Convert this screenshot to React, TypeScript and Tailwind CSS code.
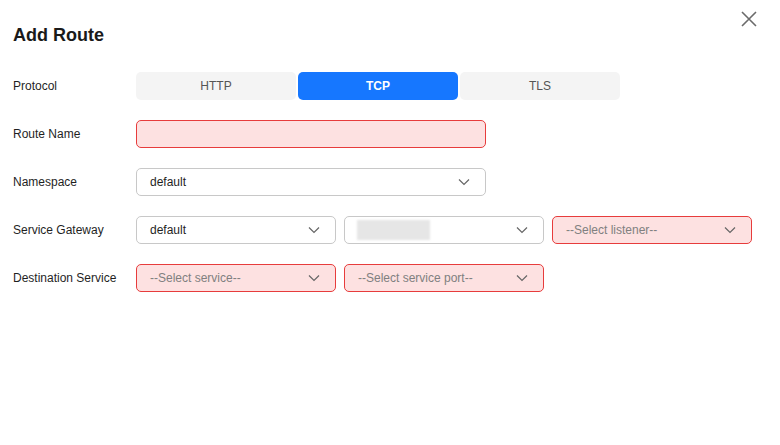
import React from "react";

const Chevron = () => (
  <svg width="12" height="8" viewBox="0 0 12 8" fill="none" className="shrink-0">
    <path d="M1 1.5 L6 6.5 L11 1.5" stroke="#666" strokeWidth="1.2" />
  </svg>
);

function Select({ value, placeholder, error, width, blur }: { value?: string; placeholder?: string; error?: boolean; width: string; blur?: boolean }) {
  return (
    <div
      className={`${width} h-[28px] flex items-center justify-between pl-[13px] pr-[15px] rounded-[5px] border ${
        error ? "border-[#e73c3c] bg-[#fde1e1]" : "border-[#c8c8c8] bg-white"
      }`}
    >
      {blur ? (
        <div className="w-[73px] h-[20px] bg-[#e6e6e6] blur-[1px] -ml-[1px]" />
      ) : (
        <span className={`text-[12px] ${value ? "text-[#1f1f1f]" : "text-[#808080]"}`}>{value ?? placeholder}</span>
      )}
      <Chevron />
    </div>
  );
}

function Row({ label, children }: { label: string; children: React.ReactNode }) {
  return (
    <div className="flex items-center h-[28px]">
      <div className="w-[123px] text-[12px] text-[#1f1f1f]">{label}</div>
      <div className="flex gap-[8px]">{children}</div>
    </div>
  );
}

export default function App() {
  return (
    <div className="w-[780px] h-[445px] bg-white relative" style={{ fontFamily: "'Liberation Sans', Arial, sans-serif" }}>
      <button className="absolute left-[741px] top-[11px] w-[16px] h-[16px]">
        <svg width="16" height="16" viewBox="0 0 16 16">
          <path d="M1 1 L15 15 M15 1 L1 15" stroke="#6b6b6b" strokeWidth="1.6" />
        </svg>
      </button>
      <div className="pl-[13px] pt-[24px]">
        <h1 className="text-[18px] font-bold text-[#1a1a1a] leading-[22px]">Add Route</h1>
        <div className="mt-[26px] flex flex-col gap-[20px]">
          <Row label="Protocol">
            <div className="flex gap-[2px]">
              <div className="w-[160px] h-[28px] rounded-[5px] bg-[#f4f4f4] flex items-center justify-center text-[12px] text-[#555]">HTTP</div>
              <div className="w-[160px] h-[28px] rounded-[5px] bg-[#1677ff] flex items-center justify-center text-[12px] font-bold text-white">TCP</div>
              <div className="w-[160px] h-[28px] rounded-[5px] bg-[#f4f4f4] flex items-center justify-center text-[12px] text-[#555]">TLS</div>
            </div>
          </Row>
          <Row label="Route Name">
            <div className="w-[350px] h-[28px] rounded-[5px] border border-[#e73c3c] bg-[#fde1e1]" />
          </Row>
          <Row label="Namespace">
            <Select width="w-[350px]" value="default" />
          </Row>
          <Row label="Service Gateway">
            <Select width="w-[200px]" value="default" />
            <Select width="w-[200px]" blur />
            <Select width="w-[200px]" placeholder="--Select listener--" error />
          </Row>
          <Row label="Destination Service">
            <Select width="w-[200px]" placeholder="--Select service--" error />
            <Select width="w-[200px]" placeholder="--Select service port--" error />
          </Row>
        </div>
      </div>
    </div>
  );
}
